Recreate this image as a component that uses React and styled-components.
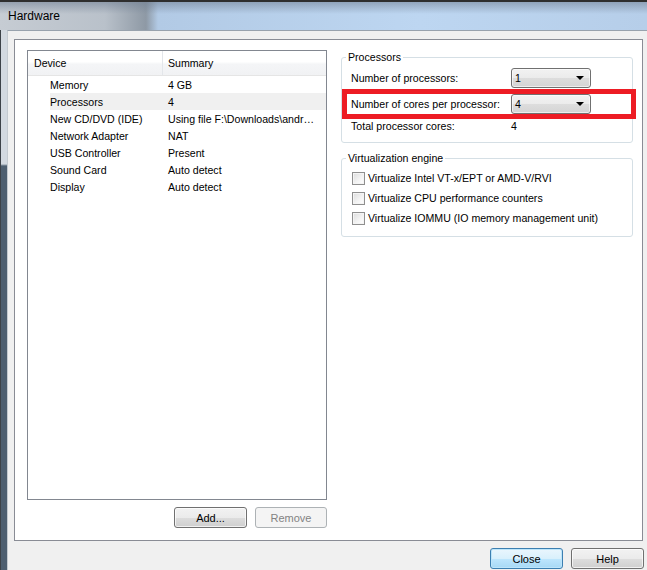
import React from 'react';
import styled, { createGlobalStyle, css } from 'styled-components';

const GlobalStyle = createGlobalStyle`
  html, body {
    margin: 0;
    padding: 0;
    height: 100%;
    overflow: hidden;
    background: #f0f0f0;
  }
  body {
    font-family: "Liberation Sans", Arial, sans-serif;
    font-size: 10.6px;
    color: #000;
  }
`;

const Window = styled.div`
  width: 647px;
  height: 570px;
  display: flex;
  flex-direction: column;
  overflow: hidden;
`;

const TitleBar = styled.div`
  height: 30px;
  flex-shrink: 0;
  display: flex;
  align-items: center;
  padding-left: 8px;
  box-sizing: border-box;
  background:
    linear-gradient(to bottom, #2e2e2e 0, #2e2e2e 2px, rgba(110, 125, 145, 0.55) 2px, rgba(110, 125, 145, 0) 14px),
    linear-gradient(to right, #c6ccd3 0, #b9c1ca 105px, #8e99a5 146px, #b2cae5 158px, #bdd6f1 420px, #b6cee9 100%);
`;

const Title = styled.span`
  font-size: 12px;
  color: #000;
  margin-top: 2px;
`;

const Body = styled.div`
  flex: 1;
  display: flex;
`;

const FrameEdge = styled.div`
  width: 7px;
  flex-shrink: 0;
  background:
    linear-gradient(to right, #3d4248 0, #3d4248 1px, transparent 1px),
    linear-gradient(to bottom, #d3d9e0 0, #d3d9e0 134px, #4e5f70 136px, #4e5f70 100%);
`;

const Client = styled.div`
  flex: 1;
  display: flex;
  flex-direction: column;
  border-top: 1px solid #98a2ad;
  border-left: 1px solid #c4cad0;
  padding: 8px 3px 0 6px;
  background: #f0f0f0;
`;

const Page = styled.div`
  width: 629px;
  height: 502px;
  box-sizing: border-box;
  border: 1px solid #898c95;
  background: #fff;
  display: flex;
  align-items: flex-start;
  padding: 10px 0 0 12px;
`;

const DevicePane = styled.div`
  width: 300px;
  display: flex;
  flex-direction: column;
`;

const DeviceList = styled.div`
  height: 450px;
  box-sizing: border-box;
  border: 1px solid #828790;
  background: #fff;
`;

const ListHeader = styled.div`
  display: flex;
  height: 24px;
  border-bottom: 1px solid #e5e5e5;
  background: linear-gradient(to bottom, #ffffff 0%, #ffffff 45%, #f4f5f7 55%, #f1f2f4 100%);
`;

const HeaderCell = styled.div`
  display: flex;
  align-items: center;
  padding-left: ${p => p.$pad}px;
  width: ${p => (p.$width ? `${p.$width}px` : 'auto')};
  flex: ${p => (p.$width ? '0 0 auto' : '1')};
  box-sizing: border-box;
  border-right: ${p => (p.$width ? '1px solid #e3e6ea' : 'none')};
`;

const DeviceRow = styled.div`
  display: flex;
  height: 17px;
  margin-left: 22px;
  align-items: center;
  ${p => p.$selected && css`
    background: #f0f0f0;
  `}
`;

const Cell = styled.div`
  width: ${p => (p.$width ? `${p.$width}px` : 'auto')};
  flex: ${p => (p.$width ? '0 0 auto' : '1')};
  padding-left: ${p => p.$pad || 0}px;
  padding-right: 6px;
  white-space: nowrap;
  overflow: hidden;
  box-sizing: border-box;
`;

const ListButtons = styled.div`
  display: flex;
  justify-content: flex-end;
  gap: 8px;
  margin-top: 7px;
`;

const Button = styled.button`
  width: ${p => p.$width || 73}px;
  height: 21px;
  box-sizing: border-box;
  padding: 0;
  font-family: "Liberation Sans", Arial, sans-serif;
  font-size: 11px;
  color: #000;
  border: 1px solid #707070;
  border-radius: 3px;
  background: linear-gradient(to bottom, #f2f2f2 0%, #ebebeb 50%, #dddddd 51%, #cfcfcf 100%);
  box-shadow: inset 0 0 0 1px rgba(255, 255, 255, 0.7);

  &:disabled {
    color: #838383;
    border-color: #adb2b5;
    background: #f4f4f4;
    box-shadow: none;
  }

  ${p => p.$primary && css`
    border-color: #3c7fb1;
    background: linear-gradient(to bottom, #eaf6fd 0%, #d9f0fc 50%, #bee6fd 51%, #a7d9f5 100%);
    box-shadow: inset 0 0 0 1px #bde5fa;
  `}
`;

const SettingsPane = styled.div`
  width: 292px;
  margin-left: 14px;
  display: flex;
  flex-direction: column;
  gap: 8px;
`;

const Group = styled.fieldset`
  margin: 0;
  padding: ${p => p.$padding};
  border: 1px solid #d5dfe5;
  border-radius: 3px;
  min-width: 0;
`;

const Legend = styled.legend`
  padding: 0 2px;
  margin-left: -5px;
  line-height: 14px;
`;

const SettingRow = styled.div`
  position: relative;
  display: flex;
  align-items: center;
  height: ${p => p.$height || 20}px;
  margin-top: ${p => p.$gap || 0}px;

  ${p => p.$highlight && css`
    &::after {
      content: '';
      position: absolute;
      left: -9px;
      right: -13px;
      top: -5px;
      bottom: -5px;
      border: 5px solid #ed1c24;
      pointer-events: none;
    }
  `}
`;

const SettingLabel = styled.span`
  width: 160px;
  flex-shrink: 0;
`;

const Dropdown = styled.div`
  width: 80px;
  height: 20px;
  box-sizing: border-box;
  border: 1px solid #707070;
  border-radius: 3px;
  background: linear-gradient(to bottom, #f2f2f2 0%, #ebebeb 50%, #dddddd 51%, #d4d4d4 100%);
  box-shadow: inset 0 0 0 1px rgba(255, 255, 255, 0.6);
  display: flex;
  align-items: center;
  justify-content: space-between;
  padding: 0 6px 0 3px;
`;

const Arrow = styled.span`
  width: 0;
  height: 0;
  border-left: 4px solid transparent;
  border-right: 4px solid transparent;
  border-top: 4px solid #000;
`;

const CheckRow = styled.label`
  display: flex;
  align-items: center;
  gap: 3px;
  height: 14px;
  margin-top: ${p => p.$gap || 0}px;
  padding-left: 1px;
`;

const CheckBox = styled.span`
  width: 13px;
  height: 13px;
  box-sizing: border-box;
  border: 1px solid #8f8f8f;
  background: linear-gradient(135deg, #dcdcdc 0%, #f4f4f4 60%, #ffffff 100%);
  box-shadow: inset 0 0 0 1px #f4f4f4;
  flex-shrink: 0;
`;

const DialogButtons = styled.div`
  display: flex;
  justify-content: flex-end;
  gap: 8px;
  margin-top: 7px;
`;

const devices = [
  { name: 'Memory', summary: '4 GB' },
  { name: 'Processors', summary: '4', selected: true },
  { name: 'New CD/DVD (IDE)', summary: 'Using file F:\\Downloads\\andr\u2026' },
  { name: 'Network Adapter', summary: 'NAT' },
  { name: 'USB Controller', summary: 'Present' },
  { name: 'Sound Card', summary: 'Auto detect' },
  { name: 'Display', summary: 'Auto detect' },
];

const engineOptions = [
  'Virtualize Intel VT-x/EPT or AMD-V/RVI',
  'Virtualize CPU performance counters',
  'Virtualize IOMMU (IO memory management unit)',
];

export default function App() {
  return (
    <>
      <GlobalStyle />
      <Window>
        <TitleBar>
          <Title>Hardware</Title>
        </TitleBar>
        <Body>
          <FrameEdge />
          <Client>
            <Page>
              <DevicePane>
                <DeviceList>
                  <ListHeader>
                    <HeaderCell $width={135} $pad={6}>Device</HeaderCell>
                    <HeaderCell $pad={5}>Summary</HeaderCell>
                  </ListHeader>
                  {devices.map(d => (
                    <DeviceRow key={d.name} $selected={d.selected}>
                      <Cell $width={113}>{d.name}</Cell>
                      <Cell $pad={5}>{d.summary}</Cell>
                    </DeviceRow>
                  ))}
                </DeviceList>
                <ListButtons>
                  <Button>Add...</Button>
                  <Button $width={72} disabled>Remove</Button>
                </ListButtons>
              </DevicePane>

              <SettingsPane>
                <Group $padding="4px 9px 9px">
                  <Legend>Processors</Legend>
                  <SettingRow>
                    <SettingLabel>Number of processors:</SettingLabel>
                    <Dropdown>1<Arrow /></Dropdown>
                  </SettingRow>
                  <SettingRow $gap={6} $highlight>
                    <SettingLabel>Number of cores per processor:</SettingLabel>
                    <Dropdown>4<Arrow /></Dropdown>
                  </SettingRow>
                  <SettingRow $gap={5} $height={14}>
                    <SettingLabel>Total processor cores:</SettingLabel>
                    <span>4</span>
                  </SettingRow>
                </Group>

                <Group $padding="6px 9px 11px">
                  <Legend>Virtualization engine</Legend>
                  {engineOptions.map((opt, i) => (
                    <CheckRow key={opt} $gap={i === 0 ? 0 : 6}>
                      <CheckBox />
                      {opt}
                    </CheckRow>
                  ))}
                </Group>
              </SettingsPane>
            </Page>
            <DialogButtons>
              <Button $primary>Close</Button>
              <Button>Help</Button>
            </DialogButtons>
          </Client>
        </Body>
      </Window>
    </>
  );
}
